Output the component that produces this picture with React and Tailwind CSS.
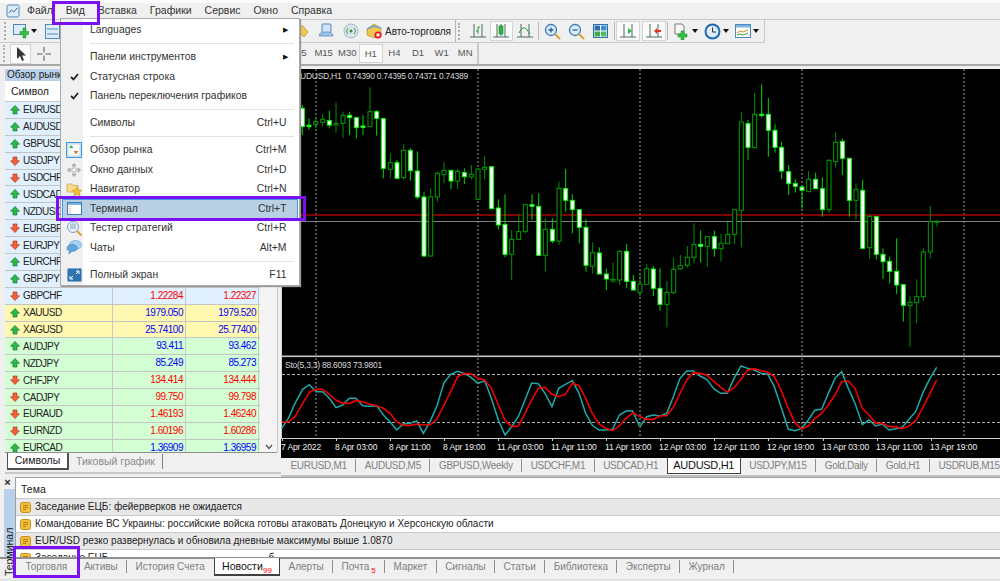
import React from 'react';

// candles in crop coordinates: [x, wickTop, wickBottom, bodyTop, bodyBottom, whiteBody]
const CANDLES_LEFT = [
  [67,105,195,115,170,1],[87,145,180,166,170,1],[107,140,175,155,163,0],[128,132,170,148,157,0],[148,122,175,152,165,1],
  [168,97,188,160,165,0],[189,125,203,136,160,0],[209,125,195,136,143,1],[229,140,205,143,173,1],[249,135,195,168,172,1],
  [270,52,170,125,170,0],[290,120,197,125,145,1],[310,143,325,146,295,1],[331,250,325,278,298,0],[351,270,328,278,325,1],
  [371,223,328,241,323,0],[391,235,332,241,302,1],[412,244,388,303,381,1],[432,365,562,381,558,1],[452,355,560,381,558,0],
  [472,305,395,310,381,0],[492,277,340,301,314,0],[513,300,357,301,333,1],[533,297,357,304,333,0],[553,295,342,308,320,1],
  [574,285,328,313,321,0],[594,295,390,297,388,0],[614,258,328,292,298,0],[635,288,418,290,416,1],[655,388,478,414,465,1],
  [675,373,562,463,553,1],[695,480,630,508,553,0],[716,432,508,485,508,0],[736,403,490,404,485,0],[756,373,450,404,409,1],
  [776,370,558,409,556,1],[796,445,603,478,556,0],[817,445,520,478,513,1],[837,335,525,355,513,0],[857,297,425,356,391,1],
  [877,373,490,391,419,1],[898,418,520,419,472,1],[918,447,605,472,586,1],[938,517,610,548,589,0],[958,532,612,549,612,1],
  [979,596,660,612,627,1],[999,578,638,628,633,0],[1019,540,645,544,630,0],[1040,522,655,544,634,1],[1060,615,662,634,660,1],
];
const CANDLES_RIGHT = [
  [0,610,680,642,667,0],[20,583,645,596,643,0],[40,588,678,597,655,1],[60,595,722,655,703,1],[81,633,772,667,703,0],
  [101,562,672,598,668,0],[121,555,600,587,597,0],[142,528,593,562,586,0],[162,460,580,523,562,0],[182,482,578,523,529,1],
  [202,497,590,500,529,0],[223,482,560,500,536,1],[243,492,575,520,536,0],[263,456,522,493,521,0],[284,418,522,419,493,0],
  [304,127,532,156,421,0],[324,150,270,161,232,1],[344,69,235,133,233,0],[365,43,142,133,135,1],[385,84,260,133,181,1],
  [405,163,248,181,232,1],[425,216,327,232,303,1],[446,285,375,305,341,1],[466,327,368,341,349,1],[486,345,416,351,361,1],
  [506,302,365,328,365,0],[527,308,357,328,356,1],[547,322,440,356,419,1],[567,268,428,271,419,0],[587,187,293,217,275,0],
  [607,206,315,214,265,1],[628,265,440,265,391,1],[648,340,448,358,391,0],[668,330,538,361,535,1],[689,435,567,439,533,0],
  [709,440,568,440,553,1],[729,535,626,553,575,1],[749,560,640,574,604,1],[770,505,672,604,645,1],[790,643,755,644,706,1],
  [810,678,830,697,707,0],[830,628,760,680,698,0],[850,535,692,546,680,0],[871,408,565,455,546,0],[891,450,470,454,456,0],
];
const TEAL_LEFT = '5,235 25,205 45,160 68,118 88,104 108,125 128,125 148,145 168,173 188,165 208,145 228,145 248,167 268,169 290,167 310,195 330,215 350,240 370,222 390,220 410,213 430,250 450,215 470,170 492,98 512,73 533,64 553,70 573,82 594,100 614,92 634,145 655,210 675,255 695,230 715,200 735,150 755,99 775,101 795,130 816,170 836,115 856,103 877,92 897,130 917,190 937,226 957,240 977,240 998,238 1018,195 1038,183 1058,183 1078,228';
const TEAL_RIGHT = '0,230 20,200 40,195 60,198 80,190 100,140 120,85 140,63 160,63 180,78 200,88 222,117 242,130 262,130 282,85 303,48 323,55 343,60 363,70 383,72 403,110 423,170 445,238 465,242 485,235 505,210 525,180 545,178 565,130 585,85 605,65 625,115 645,160 667,224 687,210 707,228 727,222 747,240 767,236 787,232 807,208 827,185 850,125 870,85 890,52';
const RED_LEFT = '5,216 25,216 45,200 68,160 88,127 108,118 128,118 148,133 168,150 188,160 208,160 228,152 248,155 268,162 290,167 310,175 330,190 350,215 370,226 390,226 410,222 430,225 450,225 470,208 492,165 512,125 533,80 553,70 573,72 594,85 614,90 634,115 655,165 675,210 695,230 715,228 735,190 755,150 775,115 795,112 816,133 836,140 856,133 877,100 897,107 917,145 937,190 957,222 977,235 998,242 1018,228 1038,205 1058,188 1078,200';
const RED_RIGHT = '0,200 20,208 40,208 60,198 80,197 100,172 120,130 140,90 160,68 180,70 200,75 222,95 242,112 262,127 282,113 303,88 323,60 343,56 363,62 383,67 403,80 423,120 445,175 465,218 485,237 505,228 525,205 545,190 565,165 585,135 605,95 625,93 645,115 667,175 687,195 707,220 727,220 747,230 767,230 787,236 807,228 827,212 850,170 870,130 890,90';

const TIME_LABELS = [
  [281,'7 Apr 2022'],[335,'8 Apr 03:00'],[389,'8 Apr 11:00'],[443,'8 Apr 19:00'],[497,'11 Apr 03:00'],[551,'11 Apr 11:00'],[605,'11 Apr 19:00'],
  [659,'12 Apr 03:00'],[713,'12 Apr 11:00'],[767,'12 Apr 19:00'],[822,'13 Apr 03:00'],[876,'13 Apr 11:00'],[930,'13 Apr 19:00'],
];

// up/down decides the arrow, tone the row colour
const SYMBOLS = [
  ['EURUSD',1,'blue'],['AUDUSD',1,'blue'],['GBPUSD',1,'blue'],['USDJPY',0,'blue'],['USDCHF',0,'blue'],['USDCAD',1,'blue'],
  ['NZDUSD',1,'blue'],['EURGBP',0,'blue'],['EURJPY',0,'blue'],['EURCHF',1,'blue'],['GBPJPY',1,'blue'],
  ['GBPCHF',0,'blue','1.22284','1.22327'],['XAUUSD',1,'yellow','1979.050','1979.520'],['XAGUSD',1,'yellow','25.74100','25.77400'],
  ['AUDJPY',1,'green','93.411','93.462'],['NZDJPY',1,'green','85.249','85.273'],['CHFJPY',0,'green','134.414','134.444'],
  ['CADJPY',0,'green','99.750','99.798'],['EURAUD',0,'green','1.46193','1.46240'],['EURNZD',0,'green','1.60196','1.60286'],
  ['EURCAD',1,'green','1.36909','1.36959'],
];
const ROW_BG = { blue: 'bg-[#e0f0ff]', yellow: 'bg-[#fff8b0]', green: 'bg-[#d4ffd4]' };

const CHART_TABS = ['EURUSD,M1','AUDUSD,M5','GBPUSD,Weekly','USDCHF,M1','USDCAD,H1','AUDUSD,H1','USDJPY,M15','Gold,Daily','Gold,H1','USDRUB,M15'];
const TERMINAL_TABS = ['Торговля','Активы','История Счета','Новости','Алерты','Почта','Маркет','Сигналы','Статьи','Библиотека','Эксперты','Журнал'];
const MENU_TOP = ['Файл','Вид','Вставка','Графики','Сервис','Окно','Справка'];

const Candle = ({ c, ox }) => {
  const x = ox + c[0] / 3;
  const y = (v) => 70 + v / 3;
  const color = c[5] ? '#00d800' : '#009000';
  return (
    <g>
      <line x1={x} x2={x} y1={y(c[1])} y2={y(c[2])} stroke={color} strokeWidth="1" />
      <rect x={x - 2} y={y(c[3])} width="4" height={Math.max(1, (c[4] - c[3]) / 3)} fill={c[5] ? '#fff' : '#000'} stroke={c[5] ? '#00ff00' : '#00a000'} strokeWidth="1" />
    </g>
  );
};

const toPoints = (s, ox) => s.split(' ').map((p) => {
  const [a, b] = p.split(',');
  return `${ox + a / 3},${350 + b / 3}`;
}).join(' ');

const Chart = () => (
  <svg className="block w-[719px] h-[389px]" viewBox="281 69 719 389" fontFamily="'Liberation Sans', sans-serif">
    <rect x="281" y="69" width="719" height="389" fill="#000" />
    <line x1="281.5" x2="281.5" y1="69" y2="438" stroke="#d0d0d0" />
    {[316, 478, 640, 802, 964].map((x) => (
      <g key={x}>
        <line x1={x} x2={x} y1="69" y2="355" stroke="#a0a0a0" strokeDasharray="2 2" />
        <line x1={x} x2={x} y1="358" y2="438" stroke="#a0a0a0" strokeDasharray="2 2" />
      </g>
    ))}
    <line x1="282" x2="1000" y1="215" y2="215" stroke="#a80000" strokeWidth="1.4" />
    <line x1="282" x2="1000" y1="221.5" y2="221.5" stroke="#808080" />
    {CANDLES_LEFT.map((c) => <Candle key={`l${c[0]}`} c={c} ox={280} />)}
    {CANDLES_RIGHT.map((c) => <Candle key={`r${c[0]}`} c={c} ox={640} />)}
    <text x="300" y="79" fill="#d8d8d8" fontSize="8.5" letterSpacing="-0.25" xmlSpace="preserve">UDUSD,H1  0.74390 0.74395 0.74371 0.74389</text>

    <rect x="282" y="355.5" width="718" height="1.6" fill="#c8c8c8" />
    <line x1="282" x2="1000" y1="374.5" y2="374.5" stroke="#b0b0b0" strokeDasharray="3 2" />
    <line x1="282" x2="1000" y1="422.5" y2="422.5" stroke="#b0b0b0" strokeDasharray="3 2" />
    <polyline points={toPoints(TEAL_LEFT, 280)} fill="none" stroke="#20a8a8" strokeWidth="1.5" />
    <polyline points={toPoints(TEAL_RIGHT, 640)} fill="none" stroke="#20a8a8" strokeWidth="1.5" />
    <polyline points={toPoints(RED_LEFT, 280)} fill="none" stroke="#f00000" strokeWidth="1.6" />
    <polyline points={toPoints(RED_RIGHT, 640)} fill="none" stroke="#f00000" strokeWidth="1.6" />
    <text x="285" y="368" fill="#d8d8d8" fontSize="8.5" letterSpacing="-0.25">Sto(5,3,3) 88.6093 73.9801</text>

    <line x1="281" x2="1000" y1="438.5" y2="438.5" stroke="#d0d0d0" />
    {TIME_LABELS.map(([x, label]) => (
      <g key={label}>
        <line x1={x + 1.5} x2={x + 1.5} y1="438" y2="441" stroke="#d0d0d0" />
        <text x={x} y="450" fill="#f0f0f0" fontSize="8.5" letterSpacing="-0.1">{label}</text>
      </g>
    ))}
  </svg>
);

const ArrowIcon = ({ up }) => (
  <svg className="w-[10px] h-[10px] shrink-0" viewBox="0 0 10 10">
    {up
      ? <path d="M5 .5 9.5 5.2H7V9H3V5.2H.5Z" fill="#2db84a" stroke="#1a7a30" strokeWidth=".7" />
      : <path d="M5 9.5 9.5 4.8H7V1H3V4.8H.5Z" fill="#f0603a" stroke="#b83a20" strokeWidth=".7" />}
  </svg>
);

const Cell = ({ value, up }) => (
  <div className={`border-r border-[#c8c8c8] text-right pr-[2px] text-[10px] tracking-[-0.5px] ${up ? 'text-[#0000ff]' : 'text-[#ff0000]'}`}>{value}</div>
);

const MarketWatch = () => (
  <aside className="w-[281px] shrink-0 bg-[#f0f0f0] flex flex-col pl-[5px] pr-[3px] mb-[3px]">
    <div className="h-[12px] shrink-0 bg-[#b9d1ea] text-[10px] leading-[11px] pl-[2px] text-[#222]">Обзор рынка</div>
    <div className="h-[21px] shrink-0 bg-white border-b border-[#c8c8c8] pl-[6px] leading-[20px] text-[10.5px] text-[#222]">Символ</div>
    <div className="flex-1 flex overflow-hidden border-r border-[#c8c8c8]">
      <div className="w-[255px] shrink-0">
        {SYMBOLS.map(([name, up, tone, bid, ask]) => (
          <div key={name} className={`grid grid-cols-[108px_73px_73px] h-[16.9px] leading-[15px] border-b border-[#c4c4c4] ${ROW_BG[tone]}`}>
            <div className="flex items-center gap-[3px] pl-[5px] border-r border-[#c8c8c8] text-[#222] text-[10px] tracking-[-0.5px]"><ArrowIcon up={up} />{name}</div>
            <Cell value={bid} up={up} />
            <Cell value={ask} up={up} />
          </div>
        ))}
      </div>
      <div className="flex-1 bg-[#f4f4f4] flex items-end justify-center pb-[2px]">
        <svg className="w-[8px] h-[6px]" viewBox="0 0 8 6"><path d="M1 1 4 4.5 7 1" fill="none" stroke="#555" strokeWidth="1.4" /></svg>
      </div>
    </div>
    <div className="h-[20px] shrink-0 flex border-t border-[#909090] text-[10.5px] mr-[1px]">
      <div className="ml-[2px] w-[62px] h-[17px] bg-white border-l border-b-2 border-r-2 border-[#505050] text-center leading-[15px] text-[#222]">Символы</div>
      <div className="w-[94px] h-[15px] mt-[1px] border-r border-[#808080] text-center leading-[15px] text-[#8a8a8a]">Тиковый график</div>
    </div>
    <div className="h-[2px] bg-[#c8c8c8] -mr-[3px]" />
  </aside>
);

const ChartTabs = () => (
  <div className="h-[19px] flex bg-[#f0f0f0] border-b-2 border-[#c0c0c0] pl-[1px] overflow-hidden text-[10px] tracking-[-0.3px]">
    {CHART_TABS.map((t) => t === 'AUDUSD,H1'
      ? <div key={t} className="shrink-0 w-[74px] -ml-[1px] h-[16px] bg-white border border-[#404040] border-t-0 text-center text-[#111] text-[11px] leading-[15px]">{t}</div>
      : <div key={t} className="shrink-0 px-[8.5px] h-[13px] mt-[1px] border-r border-[#909090] text-[#808080] leading-[13px]">{t}</div>)}
  </div>
);

const NewsIcon = () => (
  <svg className="w-[11px] h-[11px] shrink-0" viewBox="0 0 11 11">
    <rect x=".5" y=".5" width="10" height="10" rx="2" fill="#f0c040" stroke="#c89010" />
    <path d="M3 3.5h5M3 5.5h5M3 7.5h3" stroke="#a06a00" strokeWidth=".8" />
  </svg>
);

const NEWS = [
  'Заседание ЕЦБ: фейерверков не ожидается',
  'Командование ВС Украины: российские войска готовы атаковать Донецкую и Херсонскую области',
  'EUR/USD резко развернулась и обновила дневные максимумы выше 1.0870',
];

const NewsRow = ({ tone, children }) => (
  <div className={`h-[17px] shrink-0 flex items-center gap-[4px] pl-[4px] border-b border-[#c8c8c8] text-[#222] text-[10px] leading-[16px] ${tone}`}>
    <NewsIcon />
    <span>{children}</span>
  </div>
);

const Terminal = () => (
  <section className="flex-1 flex flex-col relative bg-[#f0f0f0] overflow-hidden">
    <div className="flex-1 flex overflow-hidden">
      <div className="w-[15px] shrink-0 flex flex-col items-center">
        <div className="h-[12px] text-[11px] font-bold leading-[11px] text-[#222]">×</div>
        <div className="flex-1 w-[11px] ml-[3px] bg-[#b9d1ea]" />
      </div>
      <div className="flex-1 flex flex-col bg-white border-l border-t border-[#a0a0a0]">
        <div className="h-[21px] shrink-0 border-b border-[#c8c8c8] pl-[5px] leading-[22px] text-[10.5px] text-[#222]">Тема</div>
        <NewsRow tone="bg-[#e8e8e8]">{NEWS[0]}</NewsRow>
        <NewsRow tone="bg-white">{NEWS[1]}</NewsRow>
        <NewsRow tone="bg-[#e8e8e8]">{NEWS[2]}</NewsRow>
        <NewsRow tone="bg-white">Заседание ЕЦБ<span className="ml-[160px]">б</span></NewsRow>
      </div>
    </div>
    <div className="h-[20px] shrink-0 flex pl-[17px] bg-[#f0f0f0] border-t-2 border-[#909090] relative text-[10px]">
      {TERMINAL_TABS.map((t) => {
        if (t === 'Новости') {
          return (
            <div key={t} className="shrink-0 w-[66px] ml-[1px] h-[18px] -mt-[1px] bg-white border-l border-r border-b-2 border-[#404040] pl-[7px] leading-[16px] text-[10.5px] text-[#111] relative">
              {t}<span className="absolute left-[48px] top-[8px] text-[8px] leading-[10px] text-[#ff0000]">99</span>
            </div>
          );
        }
        return (
          <div key={t} className={`shrink-0 h-[13px] mt-[1px] px-[8.4px] leading-[13px] text-[#808080] relative ${t === 'Торговля' || t === 'История Счета' ? 'border-0' : 'border-r border-[#909090]'}`}>
            {t}{t === 'Почта' && <span className="text-[8px] text-[#ff0000] ml-[2px] relative top-[3px]">5</span>}
          </div>
        );
      })}
    </div>
    <div className="h-[4px] shrink-0 border-t border-[#fafafa] bg-[#e6e6e6]" />
    <div className="absolute left-[3px] bottom-[3px] w-[14px] h-[52px] flex items-center justify-center">
      <span className="-rotate-90 whitespace-nowrap text-[10.5px] text-[#222]">Терминал</span>
    </div>
  </section>
);

const MenuItem = ({ label, shortcut, check, arrow, icon, active }) => (
  <div className={`h-[19.5px] flex items-center relative border ${active ? 'bg-[#b9cfe3] border-[#3d9ae0]' : 'border-transparent'} text-[#333]`}>
    <span className="w-[22px] shrink-0 flex justify-center">
      {check && <svg className="w-[9px] h-[8px]" viewBox="0 0 9 8"><path d="M1 4 3.5 6.5 8 1" fill="none" stroke="#222" strokeWidth="1.8" /></svg>}
      {icon}
    </span>
    <span className="ml-[5px]">{label}</span>
    {shortcut && <span className="ml-auto mr-[10px]">{shortcut}</span>}
    {arrow && <span className="ml-auto mr-[9px] text-[7px] text-[#111]">▶</span>}
  </div>
);

const MenuSep = () => (
  <div className="h-[7.5px] flex items-center pl-[28px] pr-[4px]"><div className="h-px w-full bg-[#e2e2e2]" /></div>
);

const IconMarket = () => (
  <svg className="w-[16px] h-[16px]" viewBox="0 0 16 16">
    <rect x=".5" y=".5" width="15" height="15" fill="#dcecf8" stroke="#3d9ae0" />
    <rect x="2" y="2" width="12" height="12" fill="#fff" stroke="#9ab" strokeWidth=".5" />
    <path d="M5 3 7.5 6H3ZM10 12 7.8 9h4.4Z" fill="#2db84a" />
    <path d="M10 12 7.8 9h4.4Z" fill="#f0603a" />
  </svg>
);
const IconData = () => (
  <svg className="w-[14px] h-[14px]" viewBox="0 0 14 14" fill="#b8b8b8" stroke="#8a8a8a" strokeWidth=".6">
    <path d="M7 .5 9 3H5ZM7 13.5 5 11h4ZM.5 7 3 5v4ZM13.5 7 11 9V5Z" />
    <circle cx="7" cy="7" r="2.4" fill="none" />
  </svg>
);
const IconNavigator = () => (
  <svg className="w-[17px] h-[16px]" viewBox="0 0 17 16">
    <path d="M1 3h5l1 1.5h5V11H1Z" fill="#f5dc8a" stroke="#c8a040" strokeWidth=".7" />
    <path d="M11 6l1.5 3 3.2.4-2.3 2.2.6 3.2L11 13.3l-3 1.5.6-3.2-2.3-2.2 3.2-.4Z" fill="#f2c230" stroke="#c89010" strokeWidth=".6" />
  </svg>
);
const IconTerminal = () => (
  <svg className="w-[15px] h-[13px]" viewBox="0 0 15 13">
    <rect x=".5" y=".5" width="14" height="12" fill="#fff" stroke="#3d7ab0" />
    <rect x="1" y="1" width="13" height="2" fill="#7fb4e0" />
    <path d="M3 4v7" stroke="#d08080" strokeDasharray="1 1" />
  </svg>
);
const IconTester = () => (
  <svg className="w-[17px] h-[17px]" viewBox="0 0 17 17">
    <circle cx="7" cy="7" r="5.5" fill="#e8f2fa" stroke="#7ba0c4" />
    <path d="M5 4v5M7 3v6M9 4v5" stroke="#8aa0b8" />
    <path d="M11 11l4.5 4.5" stroke="#d8a030" strokeWidth="2" />
  </svg>
);
const IconChats = () => (
  <svg className="w-[16px] h-[15px]" viewBox="0 0 16 15">
    <ellipse cx="9.5" cy="5" rx="6" ry="4.5" fill="#a6d2f2" stroke="#5a9ad0" strokeWidth=".6" />
    <path d="M1 8.5C1 5.5 4 4 7 4.5s5 2.5 4 4.5-3 2.5-5 2.2L3 14l.4-3.2C2 10.5 1 9.5 1 8.5Z" fill="#5ea8e0" stroke="#3d7ab0" strokeWidth=".6" />
  </svg>
);
const IconFull = () => (
  <svg className="w-[15px] h-[14px]" viewBox="0 0 15 14">
    <rect x=".5" y=".5" width="14" height="13" rx="1" fill="#2f74b0" stroke="#7fa8cc" />
    <path d="M9 3h3v3M12 3 9 6M6 11H3V8M3 11l3-3" fill="none" stroke="#fff" />
  </svg>
);

const ViewMenu = () => (
  <div className="absolute left-[60px] top-[18px] w-[239.5px] h-[267.5px] bg-white border border-[#a8a8a8] pt-[1.5px] pr-[1px] pl-[1px] text-[10.4px] shadow-[1px_1px_1px_#999] bg-[linear-gradient(to_right,#f0f0f0_22px,#ffffff_22px)]">
    <MenuItem label="Languages" arrow />
    <MenuSep />
    <MenuItem label="Панели инструментов" arrow />
    <MenuItem label="Статусная строка" check />
    <MenuItem label="Панель переключения графиков" check />
    <MenuSep />
    <MenuItem label="Символы" shortcut="Ctrl+U" />
    <MenuSep />
    <MenuItem label="Обзор рынка" shortcut="Ctrl+M" icon={<IconMarket />} />
    <MenuItem label="Окно данных" shortcut="Ctrl+D" icon={<IconData />} />
    <MenuItem label="Навигатор" shortcut="Ctrl+N" icon={<IconNavigator />} />
    <MenuItem label="Терминал" shortcut="Ctrl+T" icon={<IconTerminal />} active />
    <MenuItem label="Тестер стратегий" shortcut="Ctrl+R" icon={<IconTester />} />
    <MenuItem label="Чаты" shortcut="Alt+M" icon={<IconChats />} />
    <MenuSep />
    <MenuItem label="Полный экран" shortcut="F11" icon={<IconFull />} />
  </div>
);

const MenuBar = () => (
  <div className="h-[20px] shrink-0 flex items-center bg-[#f0f0f0] border-t-[3px] border-[#fbfbfb] border-b border-b-[#c8c8c8] text-[10.5px] text-[#333]">
    <svg className="ml-[6px] w-[14px] h-[14px] mr-[7px]" viewBox="0 0 14 14">
      <rect x="1" y="1" width="12" height="12" rx="1.5" fill="#dcecf8" stroke="#4a88c0" />
      <path d="M3 9 5.5 6 8 8l3-4" fill="none" stroke="#3a70a8" />
    </svg>
    {MENU_TOP.map((m) => (
      <span key={m} className="mr-[13px]">{m}</span>
    ))}
  </div>
);

const Sep = () => <div className="w-px h-[18px] bg-[#b8b8b8] mx-[1.5px] shrink-0" />;

const Tool = ({ active, children, w = 'w-[23.5px]' }) => (
  <div className={`${w} h-[20px] shrink-0 flex items-center justify-center ${active ? 'bg-[#fafafa] border border-[#d4d4d4]' : ''}`}>{children}</div>
);

const Caret = () => <svg className="w-[6px] h-[4px] ml-[2px] shrink-0" viewBox="0 0 6 4"><path d="M0 0h6L3 4Z" fill="#111" /></svg>;

const ChartBase = ({ children }) => (
  <svg className="w-[18px] h-[16px]" viewBox="0 0 18 16" fill="none">
    <path d="M1 14h16M5 1v13M13 1v13" stroke="#4a6a60" />
    {children}
  </svg>
);

const Toolbars = () => (
  <div className="h-[46px] shrink-0 flex flex-col bg-[#f0f0f0] border-b-2 border-[#a8a8a8]">
    <div className="h-[23px] flex items-center w-[765px] border-b border-r border-[#c8c8c8]">
      <div className="w-[3px] h-[18px] ml-[4px] mr-[3px] border-l-2 border-dotted border-[#b0b0b0] shrink-0" />
      <svg className="w-[16px] h-[15px] ml-[3px] shrink-0" viewBox="0 0 16 15">
        <rect x=".5" y=".5" width="12" height="10" fill="#dcecf8" stroke="#5088b8" />
        <path d="M10 4h3v3.5h2.5v3H13V14h-3v-3.500H7v-3h3Z" fill="#34c040" stroke="#1a8a28" strokeWidth=".5" />
      </svg>
      <Caret />
      <svg className="w-[15px] h-[15px] ml-[8px] shrink-0" viewBox="0 0 15 15">
        <rect x=".5" y=".5" width="14" height="14" fill="#dcecf8" stroke="#5088b8" />
        <path d="M2 5h11M2 10h11" stroke="#5088b8" />
      </svg>
      <svg className="w-[14px] h-[13px] ml-[235px] shrink-0" viewBox="0 0 14 13">
        <path d="M3 1h5l5 6-4 5-6-6Z" fill="#f0c850" stroke="#b08820" strokeWidth=".7" />
      </svg>
      <svg className="w-[16px] h-[16px] ml-[9px] shrink-0" viewBox="0 0 16 16">
        <rect x="4" y="1" width="9" height="9" rx="1" fill="#cfe4f6" stroke="#5088b8" />
        <path d="M1 13c1-4 3-4 7-4s6 0 7 4Z" fill="#9cc4e6" stroke="#5088b8" strokeWidth=".7" />
      </svg>
      <svg className="w-[16px] h-[16px] ml-[9px] shrink-0" viewBox="0 0 16 16">
        <circle cx="8" cy="8" r="7" fill="#d8e4ec" stroke="#a8b8c4" />
        <path d="M5 11a4 4 0 0 1 0-6M11 5a4 4 0 0 1 0 6" fill="none" stroke="#4aa050" />
        <circle cx="8" cy="8" r="1.500" fill="#3a8a40" />
      </svg>
      <svg className="w-[16px] h-[16px] ml-[7px] shrink-0" viewBox="0 0 16 16">
        <path d="M1 6 8 1l7 4v6l-7 4-7-3Z" fill="#f0c850" stroke="#b08820" strokeWidth=".6" />
        <path d="M1 6 8 3l7 2" fill="none" stroke="#6aa0d8" strokeWidth="1.400" />
        <circle cx="12" cy="12" r="3.600" fill="#e81818" />
        <rect x="10.500" y="10.500" width="3" height="3" fill="#fff" />
      </svg>
      <span className="ml-[3px] w-[68px] shrink-0 whitespace-nowrap text-[10px] text-[#222]">Авто-торговля</span>
      <div className="w-px h-[22px] bg-[#b8b8b8] ml-[2px] shrink-0" />
      <div className="w-[3px] h-[17px] ml-[2px] mr-[5px] border-l-2 border-dotted border-[#b0b0b0] shrink-0" />
      <Tool>
        <ChartBase><path d="M9 4v7M9 4h2M9 8H7" stroke="#2a9a40" /></ChartBase>
      </Tool>
      <Tool active>
        <ChartBase><rect x="7" y="3" width="4" height="8" fill="#2ab840" stroke="#1a7a28" strokeWidth=".6" /><path d="M9 1v2M9 11v2" stroke="#1a7a28" /></ChartBase>
      </Tool>
      <Tool>
        <ChartBase><path d="M3 10c2-5 6-7 8-3l3 4" stroke="#2a9a40" /></ChartBase>
      </Tool>
      <Sep />
      <Tool>
        <svg className="w-[17px] h-[17px]" viewBox="0 0 17 17"><circle cx="7" cy="7" r="5.500" fill="#dcecf8" stroke="#3a7ab8" strokeWidth="1.300" /><path d="M4.500 7h5M7 4.500v5" stroke="#2060a0" strokeWidth="1.300" /><path d="M11 11l5 5" stroke="#d8a030" strokeWidth="2" /></svg>
      </Tool>
      <Tool w="w-[24px]">
        <svg className="w-[17px] h-[17px]" viewBox="0 0 17 17"><circle cx="7" cy="7" r="5.500" fill="#dcecf8" stroke="#3a7ab8" strokeWidth="1.300" /><path d="M4.500 7h5" stroke="#2060a0" strokeWidth="1.300" /><path d="M11 11l5 5" stroke="#d8a030" strokeWidth="2" /></svg>
      </Tool>
      <Tool w="w-[24px]">
        <svg className="w-[15px] h-[14px]" viewBox="0 0 15 14"><rect x=".5" y=".5" width="14" height="13" fill="#fff" stroke="#2a70b0" /><rect x="1.500" y="1.500" width="5.500" height="5" fill="#2a70b0" /><rect x="8" y="1.500" width="5.500" height="5" fill="#3a90d0" /><rect x="1.500" y="7.500" width="5.500" height="5" fill="#40a850" /><rect x="8" y="7.500" width="5.500" height="5" fill="#50b860" /></svg>
      </Tool>
      <Sep />
      <Tool active>
        <ChartBase><path d="M9 5v6l4-3Z" fill="#2ab840" /></ChartBase>
      </Tool>
      <Tool active w="w-[24px] ml-[2px]">
        <ChartBase><path d="M12 5v6l-3-3ZM12 7h4v2h-4Z" fill="#e83020" /></ChartBase>
      </Tool>
      <Sep />
      <svg className="w-[16px] h-[17px] ml-[4px] shrink-0" viewBox="0 0 16 17">
        <path d="M1 1h7l2 2v8H1Z" fill="#f8f8f8" stroke="#777" />
        <path d="M7 8h3v3h3v3h-3v3H7v-3H4v-3h3Z" fill="#34c040" stroke="#1a8a28" strokeWidth=".5" />
      </svg>
      <Caret />
      <svg className="w-[17px] h-[17px] ml-[6px] shrink-0" viewBox="0 0 17 17">
        <circle cx="8.500" cy="8.500" r="7" fill="#dcecf8" stroke="#1f6ab0" strokeWidth="2" />
        <path d="M8.500 4.500v4.500H12" fill="none" stroke="#333" />
      </svg>
      <Caret />
      <svg className="w-[16px] h-[14px] ml-[6px] shrink-0" viewBox="0 0 16 14">
        <rect x=".5" y=".5" width="15" height="13" fill="#fff" stroke="#4a88c0" />
        <rect x="1" y="1" width="14" height="2.500" fill="#7fb4e0" />
        <path d="M2 9l3-2 3 1 5-2" fill="none" stroke="#d09030" />
        <path d="M2 11l3-1 3 1 5-2" fill="none" stroke="#40a050" />
      </svg>
      <Caret />
    </div>
    <div className="flex-1 flex items-center w-[479px] border-r-2 border-[#c8c8c8]">
      <div className="w-[3px] h-[17px] ml-[3px] mr-[3px] border-l-2 border-dotted border-[#b0b0b0]" />
      <div className="w-[21px] h-[20px] ml-[1px] bg-[#fafafa] border border-[#d4d4d4] flex items-center justify-center">
        <svg className="w-[10px] h-[14px]" viewBox="0 0 10 14"><path d="M1 0v12l3-3 2 5 2-1-2-4.500h4Z" fill="#333" /></svg>
      </div>
      <svg className="w-[14px] h-[14px] ml-[6px]" viewBox="0 0 14 14"><path d="M7 0v5.500M7 8.500V14M0 7h5.500M8.500 7H14" stroke="#555" /></svg>
      <div className="ml-auto flex items-center text-[#555] text-[9.5px]">
        {['M5', 'M15', 'M30', 'H1', 'H4', 'D1', 'W1', 'MN'].map((t) => (
          <span key={t} className={`w-[23.6px] h-[19px] text-center leading-[18px] ${t === 'H1' ? 'bg-[#fafafa] border border-[#d4d4d4]' : ''}`}>{t}</span>
        ))}
      </div>
    </div>
  </div>
);

const Frame = ({ className }) => <div className={`absolute border-[3px] border-[#7b11f0] pointer-events-none ${className}`} />;

export default function App() {
  return (
    <div className="w-[1000px] h-[581px] relative overflow-hidden flex flex-col bg-[#f0f0f0] text-[11px] font-['Liberation_Sans',sans-serif]">
      <MenuBar />
      <Toolbars />
      <div className="h-[411px] shrink-0 flex pt-[3px]">
        <MarketWatch />
        <div className="w-[719px] flex flex-col">
          <Chart />
          <ChartTabs />
        </div>
      </div>
      <Terminal />
      <ViewMenu />
      <Frame className="left-[52px] top-[1px] w-[48px] h-[24px]" />
      <Frame className="left-[56px] top-[196px] w-[250px] h-[25px]" />
      <Frame className="left-[13px] top-[546px] w-[67px] h-[32px]" />
    </div>
  );
}
